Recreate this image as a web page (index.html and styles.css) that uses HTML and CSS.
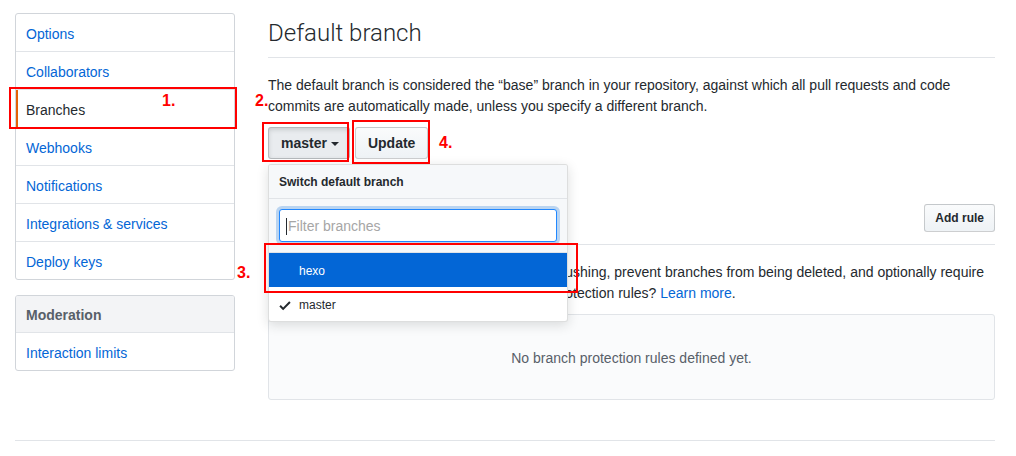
FILE: index.html
```html
<!DOCTYPE html>
<html lang="en">
<head>
<meta charset="utf-8">
<title>Branches</title>
<link rel="stylesheet" href="styles.css">
</head>
<body>
<div class="screen">
  <div class="page">
    <div class="layout">
      <nav class="sidebar">
        <div class="menu">
          <a class="menu-item">Options</a>
          <a class="menu-item">Collaborators</a>
          <a class="menu-item selected">Branches</a>
          <a class="menu-item">Webhooks</a>
          <a class="menu-item">Notifications</a>
          <a class="menu-item">Integrations &amp; services</a>
          <a class="menu-item">Deploy keys</a>
        </div>
        <div class="menu">
          <div class="menu-heading">Moderation</div>
          <a class="menu-item">Interaction limits</a>
        </div>
      </nav>
      <main class="main">
        <div class="subhead"><h2 class="subhead-title">Default branch</h2></div>
        <p class="desc">The default branch is considered the “base” branch in your repository, against which all pull requests and code<br>commits are automatically made, unless you specify a different branch.</p>
        <div class="branch-form">
          <div class="select-menu">
            <button class="btn btn-open">master<span class="caret"></span></button>
            <div class="dropdown">
              <div class="dropdown-header">Switch default branch</div>
              <div class="dropdown-filter">
                <div class="filter-input"><span class="text-caret"></span><span class="placeholder">Filter branches</span></div>
              </div>
              <div class="dropdown-item active"><span class="check"></span><span>hexo</span></div>
              <div class="dropdown-item"><span class="check"><svg width="12" height="15" viewBox="0 0 12 16"><path d="M12 5l-8 8-4-4 1.5-1.5L4 10l6.5-6.5L12 5z" fill="#24292e"/></svg></span><span>master</span></div>
            </div>
          </div>
          <button class="btn">Update</button>
        </div>
        <section class="protection">
          <div class="subhead subhead-row">
            <h2 class="subhead-title">Branch protection rules</h2>
            <button class="btn btn-sm">Add rule</button>
          </div>
          <p class="desc">Define branch protection rules to disable force pushing, prevent branches from being deleted, and optionally require<br>status checks before merging. New to branch protection rules? <a class="link">Learn more</a>.</p>
          <div class="blankslate">No branch protection rules defined yet.</div>
        </section>
      </main>
    </div>
    <div class="footer-line"></div>
  </div>

  <div class="anno box-1"></div>
  <div class="anno box-2"></div>
  <div class="anno box-3"></div>
  <div class="anno box-4"></div>
  <span class="num num-1">1.</span>
  <span class="num num-2">2.</span>
  <span class="num num-3">3.</span>
  <span class="num num-4">4.</span>
</div>
</body>
</html>
```

FILE: styles.css
```css
* { box-sizing: border-box; }

body {
  margin: 0;
  background: #fff;
  font-family: "Liberation Sans", Arial, sans-serif;
  font-size: 14px;
  line-height: 1.5;
  color: #24292e;
}

.screen {
  position: relative;
  width: 1016px;
  height: 456px;
  overflow: hidden;
}

.page {
  width: 995px;
  padding: 13px 0 0 15px;
}

.layout {
  display: flex;
  gap: 33px;
  align-items: flex-start;
}

/* Sidebar */
.sidebar {
  width: 220px;
  flex: none;
  display: flex;
  flex-direction: column;
  gap: 15px;
}

.menu {
  border: 1px solid #d1d5da;
  border-radius: 3px;
  background: #fff;
  display: flex;
  flex-direction: column;
  overflow: hidden;
}

.menu-item {
  position: relative;
  display: block;
  padding: 10px 10px 6px;
  color: #0366d6;
  text-decoration: none;
  border-bottom: 1px solid #e1e4e8;
}

.menu-item:last-child { border-bottom: 0; }

.menu-item.selected {
  color: #24292e;
}

.menu-item.selected::before {
  content: "";
  position: absolute;
  top: 0;
  bottom: 0;
  left: 0;
  width: 2px;
  background: #e36209;
}

.menu-heading {
  padding: 9px 10px 6px;
  font-weight: bold;
  color: #586069;
  background: #f3f4f6;
  border-bottom: 1px solid #e1e4e8;
}

/* Main */
.main {
  width: 727px;
  flex: none;
}

.subhead {
  padding-bottom: 8px;
  border-bottom: 1px solid #e1e4e8;
}

.main > .subhead {
  padding-top: 2px;
  padding-bottom: 6px;
}

.subhead-row {
  display: flex;
  align-items: center;
  justify-content: space-between;
}

.subhead-title {
  margin: 0;
  font-family: Roboto, "Liberation Sans", sans-serif;
  font-weight: 300;
  font-size: 24px;
  line-height: 36px;
  color: #24292e;
}

.desc {
  margin: 17px 0 10px;
  line-height: 21px;
}

.link { color: #0366d6; text-decoration: none; }

.branch-form {
  display: flex;
  gap: 5px;
  align-items: flex-start;
}

.select-menu {
  position: relative;
  display: flex;
}

.btn {
  display: inline-flex;
  align-items: center;
  height: 32px;
  padding: 0 12px;
  font-family: inherit;
  font-size: 14px;
  font-weight: bold;
  line-height: 20px;
  color: #24292e;
  border: 1px solid rgba(27, 31, 35, 0.2);
  border-radius: 3px;
  background: linear-gradient(180deg, #fafbfc, #eff3f6 90%);
}

.btn-open {
  background: #e9ecef;
  border-color: rgba(27, 31, 35, 0.25);
  box-shadow: inset 0 2px 4px rgba(27, 31, 35, 0.15);
  padding: 0 10px 0 12px;
}

.caret {
  display: inline-block;
  width: 0;
  height: 0;
  margin-left: 4px;
  margin-top: 1px;
  border-top: 4px solid #24292e;
  border-left: 4px solid transparent;
  border-right: 4px solid transparent;
}

.btn-sm {
  height: 28px;
  padding: 0 10px;
  font-size: 12px;
  font-weight: bold;
}

/* Dropdown */
.dropdown {
  position: absolute;
  top: 37px;
  left: 0;
  z-index: 10;
  width: 300px;
  background: #fff;
  border: 1px solid rgba(27, 31, 35, 0.15);
  border-radius: 3px;
  box-shadow: 0 3px 12px rgba(27, 31, 35, 0.15);
  overflow: hidden;
}

.dropdown-header {
  padding: 9px 10px 8px;
  font-size: 12px;
  font-weight: bold;
  line-height: 16px;
  background: #f6f8fa;
  border-bottom: 1px solid #e1e4e8;
}

.dropdown-filter {
  padding: 10px;
  background: #f6f8fa;
  border-bottom: 1px solid #e1e4e8;
}

.filter-input {
  display: flex;
  align-items: center;
  height: 33px;
  padding: 1px 6px 0;
  background: #fff;
  border: 1px solid #2188ff;
  border-radius: 3px;
  box-shadow: 0 0 0 3px rgba(3, 102, 214, 0.25);
}

.text-caret {
  width: 1px;
  height: 17px;
  background: #24292e;
  margin-right: 1px;
}

.placeholder {
  color: #a6a6a6;
  font-size: 14px;
}

.dropdown-item {
  display: flex;
  align-items: center;
  height: 34px;
  padding: 2px 8px 0 10px;
  font-size: 12px;
  color: #24292e;
  border-bottom: 1px solid #eaecef;
}

.dropdown-item:last-child { border-bottom: 0; height: 34px; }

.dropdown-item.active {
  background: #0366d6;
  color: #fff;
  border-bottom-color: #0366d6;
}

.check {
  width: 20px;
  display: flex;
  align-items: center;
}

/* Protection section */
.protection {
  margin-top: 41px;
}

.protection .desc {
  margin: 17px 0 10px;
}

.blankslate {
  padding: 33px 32px 31px;
  text-align: center;
  line-height: 20px;
  color: #586069;
  background: #fafbfc;
  border: 1px solid #e1e4e8;
  border-radius: 3px;
}

.footer-line {
  margin-top: 40px;
  border-top: 1px solid #e1e4e8;
}

/* Annotations overlay */
.anno {
  position: absolute;
  border: 2px solid #ff0000;
  z-index: 20;
}

.box-1 { left: 9px; top: 87px; width: 228px; height: 42px; }
.box-2 { left: 262px; top: 122px; width: 87px; height: 40px; }
.box-3 { left: 264px; top: 243px; width: 314px; height: 50px; }
.box-4 { left: 352px; top: 120px; width: 78px; height: 44px; }

.num {
  position: absolute;
  z-index: 21;
  color: #ff0000;
  font-family: "Liberation Sans", Arial, sans-serif;
  font-weight: bold;
  font-size: 16px;
  line-height: 16px;
}

.num-1 { left: 162px; top: 93px; }
.num-2 { left: 255px; top: 93px; }
.num-3 { left: 237px; top: 265px; }
.num-4 { left: 439px; top: 135px; }
```
